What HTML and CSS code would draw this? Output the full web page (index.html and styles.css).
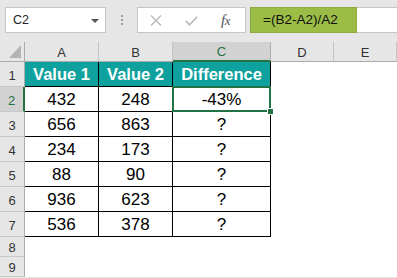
FILE: index.html
```html
<!DOCTYPE html>
<html>
<head>
<meta charset="utf-8">
<link rel="stylesheet" href="styles.css">
</head>
<body>
<div class="app">
  <div class="fbar">
    <div class="namebox"><span class="ref">C2</span><span class="caret"></span></div>
    <div class="dots"><i></i><i></i><i></i></div>
    <div class="btns">
      <svg class="ico-x" width="12" height="11" viewBox="0 0 12 11"><path d="M1 0.5 L11 10.5 M11 0.5 L1 10.5" stroke="#b9b9b9" stroke-width="1.4" fill="none"/></svg>
      <svg class="ico-ok" width="13" height="10" viewBox="0 0 13 10"><path d="M0.8 5 L4.5 8.8 L12.2 0.8" stroke="#b9b9b9" stroke-width="1.6" fill="none"/></svg>
      <span class="fx">f<span class="fx-x">x</span></span>
    </div>
    <div class="input"><span class="formula">=(B2-A2)/A2</span></div>
  </div>
  <div class="grid">
    <div class="corner"><span class="tri"></span></div>
    <div class="ch">A</div>
    <div class="ch">B</div>
    <div class="ch ch-sel">C</div>
    <div class="ch">D</div>
    <div class="ch">E</div>

    <div class="rh">1</div>
    <div class="c th">Value 1</div>
    <div class="c th">Value 2</div>
    <div class="c th">Difference</div>
    <div class="e"></div><div class="e"></div>

    <div class="rh rh-sel">2</div>
    <div class="c">432</div>
    <div class="c">248</div>
    <div class="c active">-43%<span class="handle"></span></div>
    <div class="e"></div><div class="e"></div>

    <div class="rh">3</div>
    <div class="c">656</div>
    <div class="c">863</div>
    <div class="c">?</div>
    <div class="e"></div><div class="e"></div>

    <div class="rh">4</div>
    <div class="c">234</div>
    <div class="c">173</div>
    <div class="c">?</div>
    <div class="e"></div><div class="e"></div>

    <div class="rh">5</div>
    <div class="c">88</div>
    <div class="c">90</div>
    <div class="c">?</div>
    <div class="e"></div><div class="e"></div>

    <div class="rh">6</div>
    <div class="c">936</div>
    <div class="c">623</div>
    <div class="c">?</div>
    <div class="e"></div><div class="e"></div>

    <div class="rh">7</div>
    <div class="c">536</div>
    <div class="c">378</div>
    <div class="c">?</div>
    <div class="e"></div><div class="e"></div>

    <div class="rh">8</div>
    <div class="e"></div><div class="e"></div><div class="e"></div><div class="e"></div><div class="e"></div>

    <div class="rh">9</div>
    <div class="e"></div><div class="e"></div><div class="e"></div><div class="e"></div><div class="e"></div>
  </div>
</div>
</body>
</html>
```
FILE: styles.css
```css
html, body {
  margin: 0;
  padding: 0;
  background: #ffffff;
}
body {
  width: 397px;
  height: 278px;
  overflow: hidden;
  font-family: "Liberation Sans", Arial, sans-serif;
}
.app {
  width: 397px;
  height: 278px;
  background: #e6e6e6;
}
.fbar {
  height: 42px;
  box-sizing: border-box;
  padding-top: 7px;
  display: flex;
  align-items: flex-start;
  background: #e6e6e6;
}
.namebox {
  margin-left: 5px;
  width: 101px;
  height: 26px;
  box-sizing: border-box;
  border: 1px solid #c6c6c6;
  background: #fff;
  display: flex;
  align-items: center;
  justify-content: space-between;
  padding: 0 6px 0 7px;
}
.ref {
  font-size: 12.5px;
  color: #222;
}
.caret {
  width: 0;
  height: 0;
  border-left: 4px solid transparent;
  border-right: 4px solid transparent;
  border-top: 4px solid #555;
  margin-top: 1px;
}
.dots {
  width: 31px;
  height: 26px;
  display: flex;
  flex-direction: column;
  align-items: center;
  justify-content: center;
  gap: 2px;
}
.dots i {
  display: block;
  width: 2px;
  height: 2px;
  background: #9a9a9a;
}
.btns {
  width: 109px;
  height: 26px;
  box-sizing: border-box;
  border: 1px solid #c6c6c6;
  background: #fff;
  display: flex;
  align-items: center;
  padding-left: 12px;
}
.ico-x { margin-right: 23px; }
.ico-ok { margin-right: 23px; margin-top: 1px; }
.fx {
  font-family: "Liberation Serif", "Times New Roman", serif;
  font-style: italic;
  font-size: 15px;
  color: #555;
  letter-spacing: -0.5px;
}
.fx-x { font-size: 13px; }
.input {
  margin-left: 4px;
  flex: 1;
  height: 26px;
  box-sizing: border-box;
  background: #fff;
  border: 1px solid #c6c6c6;
  border-right: none;
  display: flex;
}
.formula {
  margin: -1px 0 0 -1px;
  width: 107px;
  height: 26px;
  box-sizing: border-box;
  background: #9bbc45;
  border: 1px solid #8cab3c;
  padding-left: 12px;
  font-size: 13.5px;
  line-height: 24px;
  color: #111;
}
.grid {
  display: grid;
  grid-template-columns: 25px 74px 74px 98px 63px 63px;
  grid-template-rows: 20px repeat(7, 25px) 20px 20px;
  background: #fff;
}
.corner {
  background: #e6e6e6;
  box-sizing: border-box;
  border-right: 1px solid #ababab;
  border-bottom: 1px solid #ababab;
  display: flex;
  align-items: flex-end;
  justify-content: flex-end;
  padding: 0 3px 3px 0;
}
.tri {
  width: 12px;
  height: 13px;
  background: #b4b4b4;
  clip-path: polygon(100% 0, 100% 100%, 0 100%);
}
.ch {
  background: #e6e6e6;
  box-sizing: border-box;
  border-right: 1px solid #c4c4c4;
  border-bottom: 1px solid #ababab;
  display: flex;
  align-items: center;
  justify-content: center;
  font-size: 13px;
  color: #333;
  padding-top: 1px;
}
.ch-sel {
  background: #d2d2d2;
  color: #217346;
  border-bottom: 2px solid #217346;
  border-right-color: #ababab;
}
.rh {
  background: #e6e6e6;
  box-sizing: border-box;
  border-right: 1px solid #ababab;
  border-bottom: 1px solid #c8c8c8;
  display: flex;
  align-items: center;
  justify-content: center;
  font-size: 13px;
  color: #333;
  padding-top: 2px;
}
.rh-sel {
  background: #d2d2d2;
  color: #217346;
  border-right: 2px solid #217346;
}
.c {
  box-sizing: border-box;
  border-right: 1px solid #000;
  border-bottom: 1px solid #000;
  display: flex;
  align-items: center;
  justify-content: center;
  font-size: 17px;
  color: #000;
  padding-top: 2px;
  background: #fff;
}
.th {
  background: #0fa19e;
  color: #fff;
  font-weight: bold;
  font-size: 16.5px;
  padding-top: 1px;
}
.e {
  background: #fff;
}
.active {
  position: relative;
}
.active::before {
  content: "";
  position: absolute;
  top: -1px;
  left: -1px;
  right: -1px;
  bottom: -1px;
  border: 2px solid #217346;
}
.handle {
  position: absolute;
  right: -4px;
  bottom: -4px;
  width: 5px;
  height: 5px;
  background: #217346;
  border: 1px solid #fff;
  z-index: 2;
}
```
